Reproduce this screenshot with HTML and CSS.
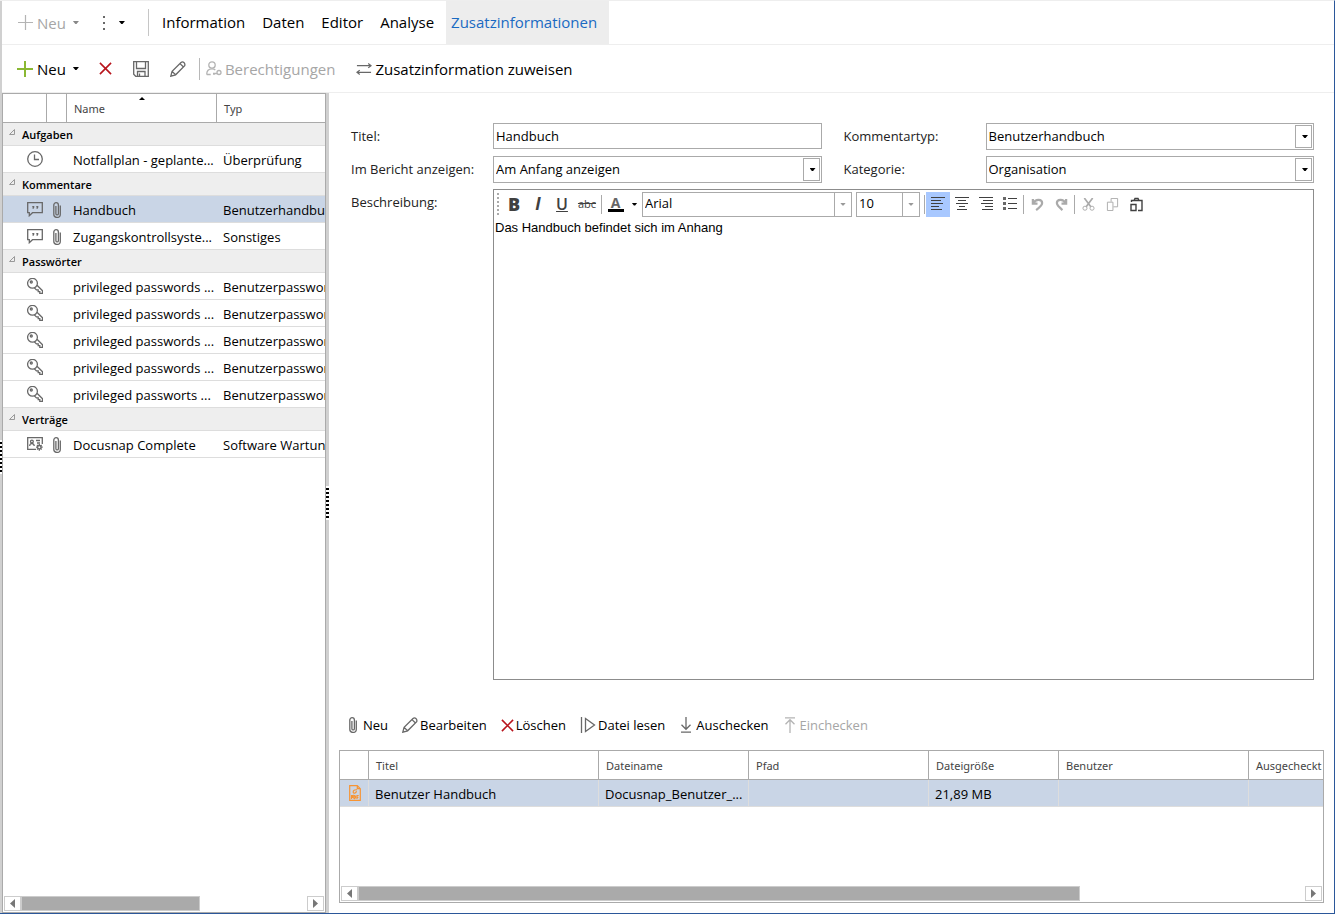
FILE: index.html
```html
<!DOCTYPE html>
<html lang="de">
<head>
<meta charset="utf-8">
<title>Zusatzinformationen</title>
<link rel="stylesheet" href="styles.css">
</head>
<body>
<svg class="defs" aria-hidden="true">
  <symbol id="plus" viewBox="0 0 16 16"><path d="M8 0v16M0 8h16"/></symbol>
  <symbol id="cross" viewBox="0 0 14 14"><path d="M1 1l12 12M13 1L1 13"/></symbol>
  <symbol id="save" viewBox="0 0 16 16"><path d="M.7.7h14.600v14.600H2.700l-2-2zM3.500 1v6.500h9V1M4.500 15v-4.500h7.500V15M6.500 12.500V15"/></symbol>
  <symbol id="pencil" viewBox="0 0 16 16"><path d="M.8 15.2l1.3-4.8L11 1.500q1.500-1.300 2.900 0t.8 3.200L5.600 13.800zM2.100 10.400l3.500 3.400M10 2.600l3.500 3.400"/></symbol>
  <symbol id="person" viewBox="0 0 16 16"><circle cx="6" cy="4" r="3.200"/><path d="M.7 13.500c0-3.500 2-5.700 5.300-5.700 1.500 0 2.500.4 3.300 1.200M.7 13.500h4M7 12.500h4M8 12.500v1.500"/><circle cx="13" cy="11.500" r="2"/></symbol>
  <symbol id="swap" viewBox="0 0 17 12"><path d="M1 2.500h15M1 9.500h15M13 .2l3 2.300-3 2.300M4 7.200L1 9.500l3 2.300"/></symbol>
  <symbol id="clock" viewBox="0 0 16 16"><circle cx="8" cy="8" r="7.300"/><path d="M7.500 3.500v5h4.500"/></symbol>
  <symbol id="chat" viewBox="0 0 16 16"><path d="M.7 1.700h14.600v10H5.500l-3.200 3v-3H.7z"/><path d="M5.300 5h2v1.500l-1 1.500h-.8l.4-1.500h-.6zM9.300 5h2v1.500l-1 1.500h-.8l.4-1.500h-.6z" class="solid"/></symbol>
  <symbol id="clip" viewBox="0 0 8 16"><path d="M7.300 3.500v8.700a3.200 3.200 0 0 1-6.500 0V3a2.300 2.300 0 0 1 4.600 0v8.700a1.200 1.200 0 0 1-2.500 0V4"/></symbol>
  <symbol id="key" viewBox="0 0 16 16"><circle cx="5.500" cy="5.300" r="4.900"/><circle cx="4.300" cy="4" r="1"/><path d="M10 7.200l5.500 5.500v2.700h-2.700v-1.700h-1.600v-1.800H9.400L7.400 9.900"/></symbol>
  <symbol id="card" viewBox="0 0 16 14"><path d="M9 12.300H.7V.7h14.600V7M9 3.500h4M10 6h3M2.700 9c0-1.600 1-2.500 2.200-2.500S7.200 7.400 7.200 9"/><circle cx="4.900" cy="4.600" r="1.400"/><circle cx="12.300" cy="10.200" r="1.700"/><path d="M12.300 7v1.400M12.300 12v1.700M9 10.200h1.500M14 10.200h1.700M10 8l1 1M14.600 8l-1 1M10 12.500l1-1M14.600 12.500l-1-1"/></symbol>
  <symbol id="read" viewBox="0 0 16 16"><path d="M1.500 0v16M5.500 1.500L14.500 8l-9 6.500z"/></symbol>
  <symbol id="down" viewBox="0 0 10 16"><path d="M5 0v12M.5 7.800L5 12.300l4.500-4.500M0 15.200h10"/></symbol>
  <symbol id="up" viewBox="0 0 10 16"><path d="M5 16V3M.5 7.200L5 2.700l4.500 4.500M0 .8h10"/></symbol>
  <symbol id="pdf" viewBox="0 0 12 16"><path d="M.7.7h7.600l3 3v11.600H.7zM8.300.7v3h3"/><path d="M8 4.800C5.500 4.500 4 5.500 4.200 7.200S7 8.500 7.500 6.200"/><path d="M2.500 14v-3.500h1.200v2H2.500M5 14v-3.500l1.500.7v1.600L5 14M8 14v-3.500h1.700M8 12.300h1.400"/></symbol>
  <symbol id="al" viewBox="0 0 16 14"><path d="M1 .5h14M1 3.500h10M1 6.500h12M1 9.500h8M1 12.500h11"/></symbol>
  <symbol id="ac" viewBox="0 0 16 14"><path d="M1 .5h14M4 3.500h8M2 6.500h12M5 9.500h6M3 12.500h10"/></symbol>
  <symbol id="ar" viewBox="0 0 16 14"><path d="M1 .5h14M5 3.500h10M3 6.500h12M7 9.500h8M4 12.500h11"/></symbol>
  <symbol id="list" viewBox="0 0 16 14"><path d="M6 1.500h9M6 6.500h9M6 11.500h9"/><path d="M1 0h3v3H1zM1 5h3v3H1zM1 10h3v3H1z" class="solid"/></symbol>
  <symbol id="undo" viewBox="0 0 14 14"><path d="M2 1v5h5M2.500 5.500C5 .5 12 1 12 5.500 12 8 9 10.500 5.500 13" stroke-width="2.400"/></symbol>
  <symbol id="redo" viewBox="0 0 14 14"><path d="M12 1v5H7M11.500 5.500C9 .5 2 1 2 5.500 2 8 5 10.500 8 13" stroke-width="2.400"/></symbol>
  <symbol id="cut" viewBox="0 0 14 14"><path d="M2.500 0L9.500 9.500M11.500 0L4.500 9.500" stroke-width="1.800"/><circle cx="3.200" cy="11" r="2.200"/><circle cx="10.800" cy="11" r="2.200"/></symbol>
  <symbol id="copy" viewBox="0 0 14 14"><path d="M1.500 4.500h6v9h-6zM5.500 4V.5h7v9H8"/></symbol>
  <symbol id="paste" viewBox="0 0 14 15"><path d="M1.500 7.500h5v6h-5zM2 5V3.500h10.500v10H8.500M4.500 3.500l1-2h3l1 2" stroke-width="1.400"/></symbol>
</svg>

<div class="app">
  <div class="edge"><span class="grip"></span></div>
  <div class="window">
    <header class="ribbon">
      <div class="ribbon-tools">
        <button class="new muted" type="button" disabled><svg class="i15"><use href="#plus"/></svg>Neu<i class="caret"></i></button>
        <button class="more" type="button" aria-label="Mehr"><span class="dots"></span><i class="caret"></i></button>
      </div>
      <nav class="tabs">
        <a href="#information">Information</a>
        <a href="#daten">Daten</a>
        <a href="#editor">Editor</a>
        <a href="#analyse">Analyse</a>
        <a class="active" href="#zusatz">Zusatzinformationen</a>
      </nav>
    </header>
    <div class="actions">
      <button class="new" type="button"><svg class="i16 green"><use href="#plus"/></svg>Neu<i class="caret"></i></button>
      <div class="action-icons">
        <button type="button" aria-label="Löschen"><svg class="i14 red"><use href="#cross"/></svg></button>
        <button type="button" aria-label="Speichern"><svg class="i16"><use href="#save"/></svg></button>
        <button type="button" aria-label="Bearbeiten"><svg class="i16"><use href="#pencil"/></svg></button>
      </div>
      <button class="rights muted" type="button" disabled><svg class="i16"><use href="#person"/></svg>Berechtigungen</button>
      <button class="assign" type="button"><svg class="swap"><use href="#swap"/></svg>Zusatzinformation zuweisen</button>
    </div>
    <div class="workspace">
      <aside class="side">
        <div class="tree-view">
          <table class="tree">
            <colgroup><col class="c-icon"><col class="c-clip"><col class="c-name"><col></colgroup>
            <thead><tr><th></th><th></th><th class="sorted">Name</th><th>Typ</th></tr></thead>
            <tbody>
              <tr class="group"><td colspan="4"><svg class="fold" viewBox="0 0 6 6"><path d="M5.500.5v5h-5z"/></svg>Aufgaben</td></tr>
              <tr><td><svg class="i16"><use href="#clock"/></svg></td><td></td><td>Notfallplan - geplante...</td><td>Überprüfung</td></tr>
              <tr class="group"><td colspan="4"><svg class="fold" viewBox="0 0 6 6"><path d="M5.500.5v5h-5z"/></svg>Kommentare</td></tr>
              <tr class="selected"><td><svg class="i16"><use href="#chat"/></svg></td><td><svg class="clip"><use href="#clip"/></svg></td><td>Handbuch</td><td>Benutzerhandbuch</td></tr>
              <tr><td><svg class="i16"><use href="#chat"/></svg></td><td><svg class="clip"><use href="#clip"/></svg></td><td>Zugangskontrollsyste...</td><td>Sonstiges</td></tr>
              <tr class="group"><td colspan="4"><svg class="fold" viewBox="0 0 6 6"><path d="M5.500.5v5h-5z"/></svg>Passwörter</td></tr>
              <tr><td><svg class="i16"><use href="#key"/></svg></td><td></td><td>privileged passwords ...</td><td>Benutzerpasswort</td></tr>
              <tr><td><svg class="i16"><use href="#key"/></svg></td><td></td><td>privileged passwords ...</td><td>Benutzerpasswort</td></tr>
              <tr><td><svg class="i16"><use href="#key"/></svg></td><td></td><td>privileged passwords ...</td><td>Benutzerpasswort</td></tr>
              <tr><td><svg class="i16"><use href="#key"/></svg></td><td></td><td>privileged passwords ...</td><td>Benutzerpasswort</td></tr>
              <tr><td><svg class="i16"><use href="#key"/></svg></td><td></td><td>privileged passworts ...</td><td>Benutzerpasswort</td></tr>
              <tr class="group"><td colspan="4"><svg class="fold" viewBox="0 0 6 6"><path d="M5.500.5v5h-5z"/></svg>Verträge</td></tr>
              <tr><td><svg class="i16"><use href="#card"/></svg></td><td><svg class="clip"><use href="#clip"/></svg></td><td>Docusnap Complete</td><td>Software Wartung</td></tr>
            </tbody>
          </table>
        </div>
        <div class="scroll">
          <button type="button" aria-label="Nach links"><i class="left"></i></button>
          <span class="track"><span class="thumb" style="width:62.5%"></span></span>
          <button type="button" aria-label="Nach rechts"><i class="right"></i></button>
        </div>
      </aside>
      <div class="splitter"><span class="grip"></span></div>
      <main class="detail">
        <form class="form">
          <label for="titel">Titel:</label>
          <input class="field" id="titel" type="text" value="Handbuch">
          <label class="second" for="ktyp">Kommentartyp:</label>
          <div class="combo"><select id="ktyp"><option>Benutzerhandbuch</option></select></div>
          <label for="bericht">Im Bericht anzeigen:</label>
          <div class="combo"><select id="bericht"><option>Am Anfang anzeigen</option></select></div>
          <label class="second" for="kat">Kategorie:</label>
          <div class="combo"><select id="kat"><option>Organisation</option></select></div>
          <label for="text">Beschreibung:</label>
          <div class="editor">
            <div class="editor-bar">
              <span class="handle"></span>
              <button class="b" type="button">B</button>
              <button class="it" type="button">I</button>
              <button class="u" type="button">U</button>
              <button class="s" type="button">abc</button>
              <span class="sep"></span>
              <button class="color" type="button" aria-label="Textfarbe"><span>A</span><i class="caret"></i></button>
              <div class="combo flat font"><select aria-label="Schriftart"><option>Arial</option></select></div>
              <div class="combo flat size"><select aria-label="Schriftgröße"><option>10</option></select></div>
              <span class="sep"></span>
              <button class="on" type="button" aria-label="Linksbündig"><svg class="al"><use href="#al"/></svg></button>
              <button type="button" aria-label="Zentriert"><svg class="al"><use href="#ac"/></svg></button>
              <button type="button" aria-label="Rechtsbündig"><svg class="al"><use href="#ar"/></svg></button>
              <button type="button" aria-label="Liste"><svg class="al"><use href="#list"/></svg></button>
              <span class="sep"></span>
              <button class="off" type="button" aria-label="Rückgängig"><svg class="i14"><use href="#undo"/></svg></button>
              <button class="off" type="button" aria-label="Wiederholen"><svg class="i14"><use href="#redo"/></svg></button>
              <span class="sep"></span>
              <button class="off" type="button" aria-label="Ausschneiden"><svg class="i14"><use href="#cut"/></svg></button>
              <button class="off" type="button" aria-label="Kopieren"><svg class="i14"><use href="#copy"/></svg></button>
              <button type="button" aria-label="Einfügen"><svg class="i15"><use href="#paste"/></svg></button>
            </div>
            <textarea id="text" spellcheck="false">Das Handbuch befindet sich im Anhang</textarea>
          </div>
        </form>
        <section class="files">
          <div class="files-bar">
            <button type="button"><svg class="clip"><use href="#clip"/></svg>Neu</button>
            <button type="button"><svg class="i16"><use href="#pencil"/></svg>Bearbeiten</button>
            <button type="button"><svg class="i14 red"><use href="#cross"/></svg>Löschen</button>
            <button type="button"><svg class="i16"><use href="#read"/></svg>Datei lesen</button>
            <button type="button"><svg class="arrow"><use href="#down"/></svg>Auschecken</button>
            <button class="muted" type="button" disabled><svg class="arrow"><use href="#up"/></svg>Einchecken</button>
          </div>
          <div class="files-box">
            <div class="files-view">
              <table class="list">
                <colgroup><col class="f-icon"><col class="f-title"><col class="f-name"><col class="f-path"><col class="f-size"><col class="f-user"><col class="f-out"></colgroup>
                <thead><tr><th></th><th>Titel</th><th>Dateiname</th><th>Pfad</th><th>Dateigröße</th><th>Benutzer</th><th>Ausgecheckt</th></tr></thead>
                <tbody><tr class="selected"><td><svg class="pdf"><use href="#pdf"/></svg></td><td>Benutzer Handbuch</td><td>Docusnap_Benutzer_...</td><td></td><td>21,89 MB</td><td></td><td></td></tr></tbody>
              </table>
            </div>
            <div class="scroll">
              <button type="button" aria-label="Nach links"><i class="left"></i></button>
              <span class="track"><span class="thumb" style="width:76.2%"></span></span>
              <button type="button" aria-label="Nach rechts"><i class="right"></i></button>
            </div>
          </div>
        </section>
      </main>
    </div>
  </div>
</div>
</body>
</html>
```

FILE: styles.css
```css
* { box-sizing: border-box; }
body {
  margin: 0;
  background: #fff;
  color: #000;
  font: 13px/20px "Open Sans", "Noto Sans", sans-serif;
}
button, input, select, textarea { font: inherit; color: inherit; margin: 0; }
textarea, select, input { outline: 0; }
button {
  display: flex;
  align-items: center;
  padding: 0;
  border: 0;
  background: none;
}
.defs { position: absolute; width: 0; height: 0; }
svg { display: block; flex: none; fill: none; stroke: #686868; stroke-width: 1.3; overflow: visible; }
.solid { fill: currentColor; stroke: none; color: #686868; }
.i14 { width: 13px; height: 13px; }
.i15 { width: 15px; height: 15px; }
.i16 { width: 16px; height: 16px; }
.clip { width: 8px; height: 16px; }
.green { stroke: #8ab833; stroke-width: 2; }
.red { stroke: #b8141c; stroke-width: 1.7; }
.muted { color: #a6a6a6; }
.muted svg { stroke: #b4b4b4; }
.caret {
  width: 6px;
  height: 3px;
  background: #000;
  clip-path: polygon(0 0, 100% 0, 60% 100%, 40% 100%);
}
.muted .caret { background: #888; }

.app {
  display: flex;
  min-height: 100vh;
  border-top: 1px solid #eee;
  border-right: 1px solid #2b579a;
  border-bottom: 1px solid #2b579a;
}
.edge { width: 2px; display: flex; flex-direction: column; justify-content: center; background: #d0d0d0; }
.grip {
  height: 34px;
  background: repeating-linear-gradient(#fff 0 2px, #000 2px 4px);
}
.window { flex: 1; min-width: 0; display: flex; flex-direction: column; }

.ribbon { display: flex; height: 44px; border-bottom: 1px solid #eee; font-size: 15px; }
.ribbon-tools {
  display: flex;
  width: 147px;
  margin: 8px 0;
  padding-left: 16px;
  border-right: 1px solid #c6c6c6;
}
.new { gap: 4px; }
.new .caret, .more .caret { margin-left: 3px; }
.more { gap: 11px; margin-left: 24px; }
.dots { width: 2px; height: 14px; background: repeating-linear-gradient(#686868 0 2px, transparent 2px 6px); }
.tabs { display: flex; padding-left: 8px; }
.tabs a { display: flex; align-items: center; padding: 0 12px 2px 5px; color: #000; text-decoration: none; }
.tabs .active { background: #ededed; color: #1a6ac2; }

.actions { display: flex; height: 48px; padding-left: 15px; align-items: center; border-bottom: 1px solid #eee; font-size: 15px; }
.action-icons { display: flex; align-items: center; gap: 21px; margin-left: 20px; }
.rights { gap: 3px; height: 22px; margin-left: 13px; padding-left: 6px; border-left: 1px solid #b8b8b8; }
.assign { gap: 3px; margin-left: 21px; }
.swap { width: 16px; height: 12px; }

.workspace { flex: 1; display: flex; min-height: 0; }
.side {
  width: 324px;
  display: flex;
  flex-direction: column;
  justify-content: space-between;
  border: 1px solid #aaa;
}
.tree-view, .files-view { overflow: hidden; }
table { width: 100%; table-layout: fixed; border-collapse: separate; border-spacing: 0; }
th {
  height: 29px;
  padding: 2px 0 0 7px;
  border-right: 1px solid #aaa;
  border-bottom: 1px solid #aaa;
  color: #444;
  font-family: "Noto Sans", sans-serif;
  font-size: 11px;
  font-weight: 400;
  text-align: left;
}
th:last-child, .list td:last-child { border-right: 0; }
td {
  height: 27px;
  padding: 2px 0 0 6px;
  border-bottom: 1px solid #ddd;
  line-height: 20px;
  overflow: hidden;
  white-space: nowrap;
}
.selected td { background: #c9d5e6; }
.c-icon { width: 44px; }
.c-clip { width: 20px; }
.c-name { width: 150px; }
.tree td:first-child { padding: 0 0 0 24px; }
.sorted { position: relative; }
.sorted::after {
  content: "";
  position: absolute;
  top: 3px;
  left: 72px;
  border: 3px solid transparent;
  border-top: 0;
  border-bottom-color: #000;
}
.tree .group td { height: 23px; padding: 2px 0 0 6px; background: #eee; font-size: 11px; font-weight: 600; }
.fold { display: inline-block; width: 6px; height: 6px; margin-right: 7px; vertical-align: 4px; stroke: #999; stroke-width: 1; }

.scroll { display: flex; height: 15px; margin: 0 1px 1px; }
.scroll button { width: 17px; justify-content: center; border: 1px solid #ccc; background: #fff; }
.scroll i { width: 5px; height: 9px; background: #777; }
.left { clip-path: polygon(100% 0, 100% 100%, 0 50%); }
.right { clip-path: polygon(0 0, 0 100%, 100% 50%); }
.track { flex: 1; display: flex; }
.thumb { border: 1px solid #ccc; background: #aaa; }
.splitter { width: 3px; display: flex; flex-direction: column; justify-content: center; background: #d0d0d0; }

.detail { flex: 1; min-width: 0; display: flex; flex-direction: column; padding: 30px 10px 10px; }
.form {
  flex: 1;
  display: grid;
  grid-template-columns: 142px 1fr 164px 1fr;
  grid-template-rows: 27px 27px 1fr;
  row-gap: 6px;
  padding: 0 10px 0 12px;
}
label { padding-top: 3px; color: #222; }
.second { padding-left: 22px; }
.field { width: 100%; height: 26px; padding: 0 2px; border: 1px solid #aaa; }
.combo { position: relative; display: grid; border: 1px solid #aaa; background: #fff; }
.combo select {
  grid-area: 1 / 1;
  min-width: 0;
  padding: 0 20px 2px 2px;
  border: 0;
  background: none;
  appearance: none;
}
.combo::after {
  content: "";
  grid-area: 1 / 1;
  justify-self: end;
  width: 15px;
  margin: 1px;
  border: 1px solid #aaa;
  pointer-events: none;
}
.combo::before {
  content: "";
  grid-area: 1 / 1;
  place-self: center end;
  width: 6px;
  height: 3px;
  margin-right: 5px;
  background: #000;
  clip-path: polygon(0 0, 100% 0, 60% 100%, 40% 100%);
  pointer-events: none;
}
.flat { height: 25px; }
.flat::after { width: 16px; margin: 0; border-width: 0 0 0 1px; }
.flat::before { background: #999; }

.editor { grid-column: 2 / 5; display: flex; flex-direction: column; border: 1px solid #8c8c8c; }
.editor-bar { display: flex; align-items: center; height: 28px; padding-left: 3px; color: #404040; }
.editor-bar button { flex: none; width: 24px; height: 25px; justify-content: center; }
.editor-bar svg { stroke: #404040; stroke-width: 1; }
.editor-bar .off svg { stroke: #aaa; }
.editor-bar .on { background: #a8c8ff; }
.editor-bar .solid { color: #404040; }
.editor-bar .b { font-size: 18px; font-weight: 800; }
.editor-bar .it { font-size: 17px; font-style: italic; font-weight: 700; }
.editor-bar .u { font-size: 16px; font-weight: 600; text-decoration: underline; }
.editor-bar .s { width: 26px; font-size: 11px; text-decoration: line-through; }
.editor-bar .color { width: 39px; gap: 8px; }
.color span { width: 16px; height: 15px; border-bottom: 3px solid #000; color: #666; font-size: 14px; font-weight: 700; line-height: 11px; }
.handle { width: 2px; height: 22px; margin-right: 3px; background: repeating-linear-gradient(#aaa 0 2px, transparent 2px 4px); }
.sep { width: 1px; height: 19px; margin: 0 1px; background: #aaa; }
.al { width: 16px; height: 14px; }
.font { width: 210px; }
.size { width: 64px; margin: 0 3px 0 4px; }
.editor-bar .combo { color: #000; }
textarea {
  flex: 1;
  width: 100%;
  padding: 0 1px;
  border: 0;
  background: none;
  resize: none;
  font-family: "Liberation Sans", Arial, sans-serif;
}

.files-bar { display: flex; height: 30px; margin: 30px 0 10px; padding-left: 8px; gap: 14px; }
.files-bar button { gap: 2px; }
.files-bar .clip { margin: 0 4px 0 2px; }
.arrow { width: 10px; height: 16px; margin: 0 3px 0 2px; }
.files-box { display: flex; flex-direction: column; justify-content: space-between; height: 153px; border: 1px solid #aaa; }
.list td { border-right: 1px solid #ddd; }
.f-icon { width: 29px; }
.f-title { width: 230px; }
.f-name { width: 150px; }
.f-path { width: 180px; }
.f-size { width: 130px; }
.f-user { width: 190px; }
.list td:first-child { padding: 0 0 0 9px; }
.pdf { width: 12px; height: 16px; stroke: #f79433; stroke-width: 1.2; }
```
